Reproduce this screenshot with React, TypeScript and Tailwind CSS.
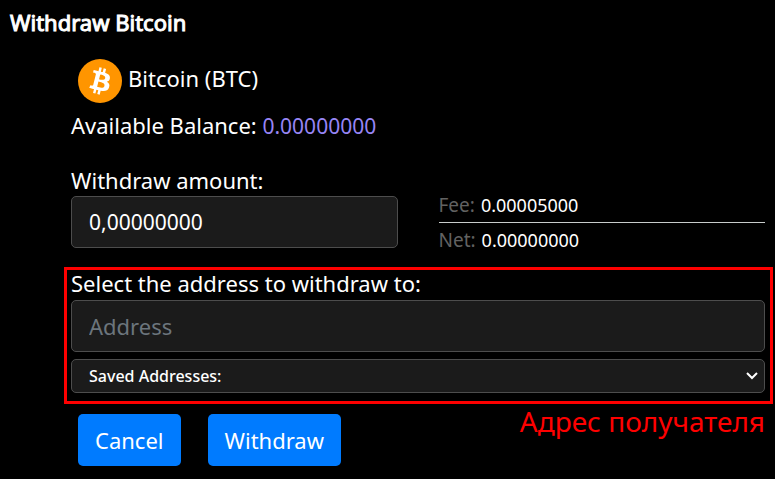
import { useState } from 'react';

const fieldClass = 'w-full rounded-[5px] border border-[#4d4d4d] bg-[#1b1b1b] px-[17px] outline-none';
const buttonClass = 'h-[52px] rounded-[5px] bg-[#007bff] px-[17px] text-[22px] leading-8 text-white';

function BitcoinIcon() {
  return (
    <svg viewBox="0 0 32 32" className="size-11 shrink-0" aria-hidden="true">
      <circle cx="16" cy="16" r="16" fill="#ff9500" />
      <path
        fill="#fff"
        d="M23.189 14.02c.314-2.096-1.283-3.223-3.465-3.975l.708-2.84-1.728-.43-.69 2.765c-.454-.114-.92-.22-1.385-.326l.695-2.783L15.596 6l-.708 2.839c-.376-.086-.746-.17-1.104-.26l.002-.009-2.384-.595-.46 1.846s1.283.294 1.256.312c.7.175.826.638.805 1.006l-.806 3.235c.048.012.11.03.18.057l-.183-.045-1.13 4.532c-.086.212-.303.531-.793.41.018.025-1.256-.313-1.256-.313l-.858 1.978 2.25.561c.418.105.828.215 1.231.318l-.715 2.872 1.727.43.708-2.84c.472.127.93.245 1.378.357l-.706 2.828 1.728.43.715-2.866c2.948.558 5.164.333 6.097-2.333.752-2.146-.037-3.385-1.588-4.192 1.13-.26 1.98-1.003 2.207-2.538zm-3.95 5.538c-.533 2.147-4.148.986-5.32.695l.95-3.805c1.172.293 4.929.872 4.37 3.11zm.535-5.569c-.487 1.953-3.495.96-4.47.717l.86-3.45c.975.243 4.118.696 3.61 2.733z"
      />
    </svg>
  );
}

export default function App() {
  const [amount, setAmount] = useState('0,00000000');
  const [address, setAddress] = useState('');

  return (
    <main className="min-h-screen bg-black font-['Noto_Sans',sans-serif] text-[22px] leading-8 text-white">
      <h1 className="px-[10px] pt-[6px] [-webkit-text-stroke:1px_#fff]">Withdraw Bitcoin</h1>

      <form onSubmit={(e) => e.preventDefault()} className="pt-[21px] pr-[2px] pb-3 pl-16">
        <div className="pr-2 pl-[7px]">
          <div className="flex gap-[6px] pl-[7px]">
            <BitcoinIcon />
            <h2 className="pt-[3px]">Bitcoin (BTC)</h2>
          </div>
          <p className="mt-[6px]">
            Available Balance: <span className="text-[21px] text-[#9785f5]">0.00000000</span>
          </p>

          <div className="mt-[22px] grid grid-cols-2 gap-[41px]">
            <div>
              <label htmlFor="amount" className="block">Withdraw amount:</label>
              <input id="amount" type="text" value={amount} onChange={(e) => setAmount(e.target.value)} className={`${fieldClass} h-[52px] text-[21px]`} />
            </div>
            <dl className="pt-6 text-[18px] leading-[34px]">
              <div className="flex gap-[6px] border-b border-[#c8cccb]">
                <dt className="text-[19px] text-[#626262]">Fee:</dt>
                <dd>0.00005000</dd>
              </div>
              <div className="flex gap-[6px]">
                <dt className="text-[19px] text-[#626262]">Net:</dt>
                <dd>0.00000000</dd>
              </div>
            </dl>
          </div>
        </div>

        <section className="mt-[10px] border-3 border-[#fe0000] pr-[5px] pb-2 pl-1">
          <label htmlFor="address" className="block pb-1 leading-[26px]">Select the address to withdraw to:</label>
          <input id="address" type="text" placeholder="Address" value={address} onChange={(e) => setAddress(e.target.value)} className={`${fieldClass} h-[52px] placeholder:text-[#6c757d]`} />
          <div className="mt-[7px] grid items-center">
            <select aria-label="Saved Addresses" className={`${fieldClass} col-start-1 row-start-1 h-[34px] appearance-none text-base font-medium`}>
              <option>Saved Addresses:</option>
            </select>
            <svg viewBox="0 0 12 8" className="pointer-events-none col-start-1 row-start-1 mr-[7px] h-2 w-3 justify-self-end" aria-hidden="true">
              <path d="M1 1l5 5 5-5" fill="none" stroke="#fff" strokeWidth="2" />
            </svg>
          </div>
        </section>

        <div className="flex items-start pr-2 pl-[14px]">
          <div className="flex gap-[27px] pt-[10px]">
            <button type="button" className={buttonClass}>Cancel</button>
            <button type="submit" className={buttonClass}>Withdraw</button>
          </div>
          <p className="ml-auto text-[28px] leading-[34px] text-[#fe0000]">Адрес получателя</p>
        </div>
      </form>
    </main>
  );
}
